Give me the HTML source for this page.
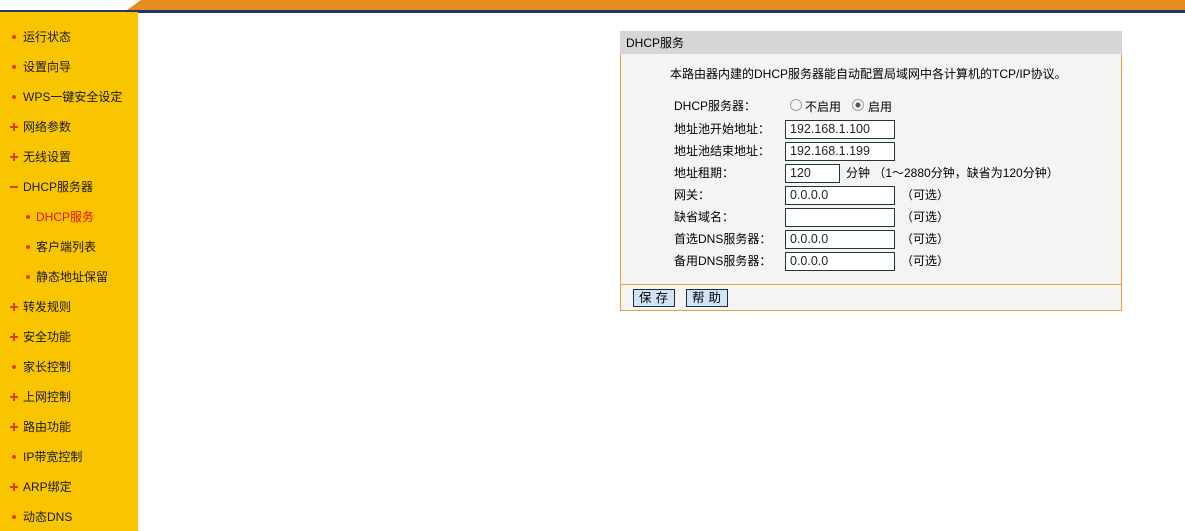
<!DOCTYPE html>
<html><head><meta charset="utf-8"><style>
*{margin:0;padding:0;box-sizing:border-box}
body{width:1185px;height:531px;overflow:hidden;background:#fff;position:relative;font-family:"Liberation Sans","Noto Sans CJK SC","WenQuanYi Zen Hei",sans-serif;font-size:12px;color:#000}
.a{position:absolute;white-space:nowrap;line-height:14px}
#side{position:absolute;left:0;top:12px;width:138px;height:519px;background:#f8c500}
.mi{position:absolute;color:#1a1a1a;font-size:12px;line-height:14px;white-space:nowrap}
.pl{position:absolute;width:8px;height:8px}
.pl:before{content:"";position:absolute;left:0;top:3px;width:8px;height:2px;background:#d8401a}
.pl:after{content:"";position:absolute;left:3px;top:0;width:2px;height:8px;background:#d8401a}
.mn{position:absolute;width:8px;height:2px;background:#d8401a}
.dot{position:absolute;width:4px;height:4px;border-radius:2px;background:#d8401a}
.inp{position:absolute;height:19px;border:1px solid #1e3a2e;background:#fff;font-size:12.5px;padding-left:4px;line-height:17px;color:#222}
.lbl{position:absolute;font-size:12px;line-height:14px;white-space:nowrap}
.opt{position:absolute;font-size:12px;line-height:14px;white-space:nowrap}
.btn{position:absolute;height:18px;width:42px;border:1px solid #1c2e3a;background:#d2e3f6;font-size:12.5px;text-align:center;line-height:16px;letter-spacing:4px;padding-left:3px}
</style></head><body>
<svg class="a" style="left:0;top:0" width="1185" height="13">
<polygon points="141,0 1185,0 1185,10 127,10" fill="#e88c20"/>
<rect x="0" y="10" width="1185" height="3" fill="#1e3a6a"/>
</svg>
<div id="side"></div>
<div class="dot" style="left:12px;top:35px"></div><div class="mi" style="left:23px;top:30px">运行状态</div>
<div class="dot" style="left:12px;top:65px"></div><div class="mi" style="left:23px;top:60px">设置向导</div>
<div class="dot" style="left:12px;top:95px"></div><div class="mi" style="left:23px;top:90px">WPS一键安全设定</div>
<div class="pl" style="left:10px;top:123px"></div><div class="mi" style="left:23px;top:120px">网络参数</div>
<div class="pl" style="left:10px;top:153px"></div><div class="mi" style="left:23px;top:150px">无线设置</div>
<div class="mn" style="left:10px;top:186px"></div><div class="mi" style="left:23px;top:180px">DHCP服务器</div>
<div class="dot" style="left:26px;top:215px"></div><div class="mi" style="left:36px;top:210px;color:#e01010">DHCP服务</div>
<div class="dot" style="left:26px;top:245px"></div><div class="mi" style="left:36px;top:240px">客户端列表</div>
<div class="dot" style="left:26px;top:275px"></div><div class="mi" style="left:36px;top:270px">静态地址保留</div>
<div class="pl" style="left:10px;top:303px"></div><div class="mi" style="left:23px;top:300px">转发规则</div>
<div class="pl" style="left:10px;top:333px"></div><div class="mi" style="left:23px;top:330px">安全功能</div>
<div class="dot" style="left:12px;top:365px"></div><div class="mi" style="left:23px;top:360px">家长控制</div>
<div class="pl" style="left:10px;top:393px"></div><div class="mi" style="left:23px;top:390px">上网控制</div>
<div class="pl" style="left:10px;top:423px"></div><div class="mi" style="left:23px;top:420px">路由功能</div>
<div class="dot" style="left:12px;top:455px"></div><div class="mi" style="left:23px;top:450px">IP带宽控制</div>
<div class="pl" style="left:10px;top:483px"></div><div class="mi" style="left:23px;top:480px">ARP绑定</div>
<div class="dot" style="left:12px;top:515px"></div><div class="mi" style="left:23px;top:510px">动态DNS</div>
<div class="a" style="left:620px;top:31px;width:502px;height:23px;background:#d6d6d6"></div>
<div class="a" style="left:626px;top:36px">DHCP服务</div>
<div class="a" style="left:620px;top:54px;width:502px;height:257px;background:#f4f4f4;border:1px solid #e8a040;border-top:none"></div>
<div class="a" style="left:621px;top:284px;width:500px;height:1px;background:#e8a040"></div>
<div class="a" style="left:670px;top:67px">本路由器内建的DHCP服务器能自动配置局域网中各计算机的TCP/IP协议。</div>
<div class="lbl" style="left:674px;top:99px">DHCP服务器：</div>
<svg class="a" style="left:789px;top:98px" width="14" height="14"><circle cx="7" cy="7" r="5.5" fill="#f4f4f4" stroke="#a0a0a0"/></svg>
<div class="opt" style="left:805px;top:100px">不启用</div>
<svg class="a" style="left:851px;top:98px" width="14" height="14"><circle cx="7" cy="7" r="5.5" fill="#f4f4f4" stroke="#a0a0a0"/><circle cx="7" cy="7" r="2.5" fill="#555"/></svg>
<div class="opt" style="left:868px;top:100px">启用</div>
<div class="lbl" style="left:674px;top:122px">地址池开始地址：</div>
<div class="inp" style="left:785px;top:120px;width:110px">192.168.1.100</div>
<div class="lbl" style="left:674px;top:144px">地址池结束地址：</div>
<div class="inp" style="left:785px;top:142px;width:110px">192.168.1.199</div>
<div class="lbl" style="left:674px;top:166px">地址租期：</div>
<div class="inp" style="left:785px;top:164px;width:55px">120</div>
<div class="lbl" style="left:846px;top:166px">分钟 （1～2880分钟，缺省为120分钟）</div>
<div class="lbl" style="left:674px;top:188px">网关：</div>
<div class="inp" style="left:785px;top:186px;width:110px">0.0.0.0</div>
<div class="lbl" style="left:901px;top:188px">（可选）</div>
<div class="lbl" style="left:674px;top:210px">缺省域名：</div>
<div class="inp" style="left:785px;top:208px;width:110px"></div>
<div class="lbl" style="left:901px;top:210px">（可选）</div>
<div class="lbl" style="left:674px;top:232px">首选DNS服务器：</div>
<div class="inp" style="left:785px;top:230px;width:110px">0.0.0.0</div>
<div class="lbl" style="left:901px;top:232px">（可选）</div>
<div class="lbl" style="left:674px;top:254px">备用DNS服务器：</div>
<div class="inp" style="left:785px;top:252px;width:110px">0.0.0.0</div>
<div class="lbl" style="left:901px;top:254px">（可选）</div>
<div class="btn" style="left:633px;top:289px">保存</div>
<div class="btn" style="left:686px;top:289px">帮助</div>
</body></html>
